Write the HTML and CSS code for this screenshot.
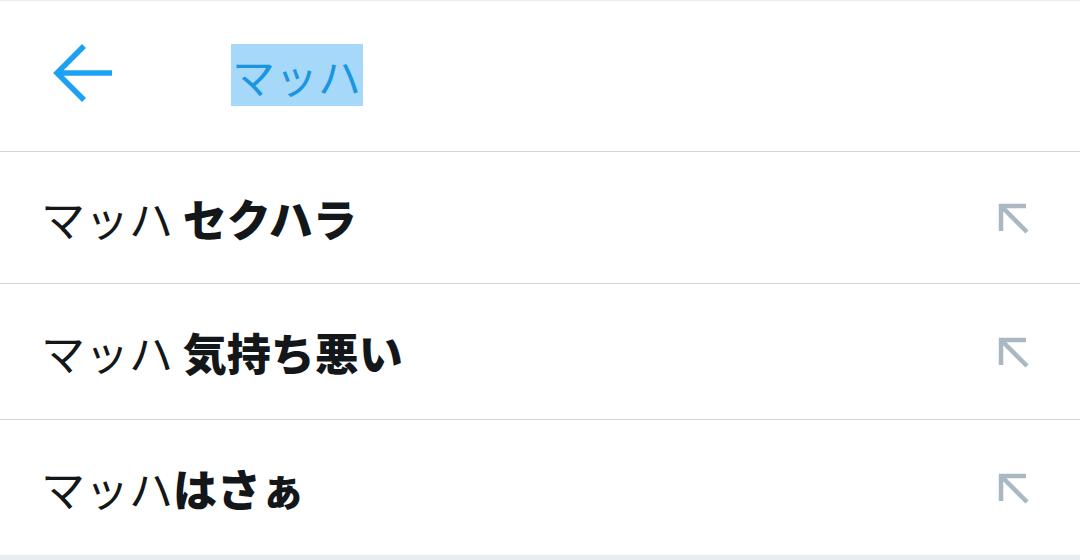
FILE: index.html
```html
<!DOCTYPE html>
<html lang="ja">
<head>
<meta charset="utf-8">
<link rel="stylesheet" href="styles.css">
</head>
<body>
<div class="page">
  <header class="header">
    <svg class="back" width="60" height="58" viewBox="0 0 60 58">
      <path d="M31 2 L4 29 L31 56 M4 29 H59" fill="none" stroke="#1da1f2" stroke-width="5.5"/>
    </svg>
    <span class="query">マッハ</span>
  </header>
  <ul class="list">
    <li class="row r1"><span class="txt">マッハ <b>セクハラ</b></span><svg class="fill" width="32" height="32" viewBox="0 0 32 32"><path d="M3 28 V3 H28 M3 3 L29 29" fill="none" stroke="#aab8c2" stroke-width="4.5"/></svg></li>
    <li class="row r2"><span class="txt">マッハ <b>気持ち悪い</b></span><svg class="fill" width="32" height="32" viewBox="0 0 32 32"><path d="M3 28 V3 H28 M3 3 L29 29" fill="none" stroke="#aab8c2" stroke-width="4.5"/></svg></li>
    <li class="row r3"><span class="txt">マッハ<b>はさぁ</b></span><svg class="fill" width="32" height="32" viewBox="0 0 32 32"><path d="M3 28 V3 H28 M3 3 L29 29" fill="none" stroke="#aab8c2" stroke-width="4.5"/></svg></li>
  </ul>
</div>
</body>
</html>
```
FILE: styles.css
```css
html, body {
  margin: 0;
  padding: 0;
  background: #e6ecf0;
}
.page {
  width: 1080px;
  height: 555px;
  background: #ffffff;
  border-top: 1px solid #e6ecf0;
  box-sizing: border-box;
  font-family: "Noto Sans CJK JP", "Noto Sans", sans-serif;
  overflow: hidden;
}
.header {
  height: 151px;
  box-sizing: border-box;
  border-bottom: 1px solid #ccd6dd;
  display: flex;
  align-items: center;
  padding-left: 53px;
}
.back {
  display: block;
  margin-top: -6px;
}
.query {
  margin-left: 118px;
  margin-top: -2px;
  font-size: 43px;
  line-height: 62px;
  color: #1b95e0;
  background: #a6d8f9;
  padding: 0 2px 0 1px;
}
.list {
  list-style: none;
  margin: 0;
  padding: 0;
}
.row {
  display: flex;
  align-items: center;
  justify-content: space-between;
  padding: 0 50px 0 41px;
  box-sizing: border-box;
  color: #14171a;
  border-bottom: 1px solid #ccd6dd;
}
.r1 { height: 132px; }
.r2 { height: 136px; }
.r3 { height: 135px; border-bottom: none; }
.txt {
  font-size: 44px;
  line-height: 60px;
  font-weight: 400;
}
.txt b {
  font-weight: 900;
}
.fill {
  display: block;
  margin-top: 2px;
}
```
